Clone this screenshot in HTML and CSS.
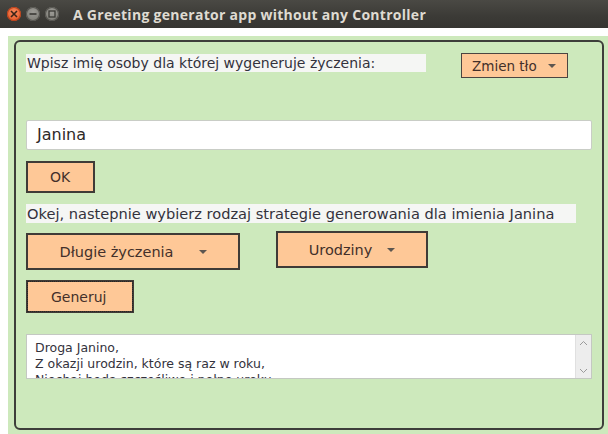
FILE: index.html
```
<!DOCTYPE html>
<html lang="pl">
<head>
<meta charset="utf-8">
<title>A Greeting generator app without any Controller</title>
<link rel="stylesheet" href="styles.css">
</head>
<body>
<div class="titlebar">
  <div class="wbtns">
    <span class="wbtn close"><svg width="8" height="8" viewBox="0 0 8 8"><path d="M1 1L7 7M7 1L1 7" stroke="#3a2418" stroke-width="1.6"/></svg></span>
    <span class="wbtn"><svg width="8" height="8" viewBox="0 0 8 8"><path d="M0.5 4H7.5" stroke="#3a3935" stroke-width="1.6"/></svg></span>
    <span class="wbtn"><svg width="8" height="8" viewBox="0 0 8 8"><rect x="1" y="1" width="6" height="6" fill="none" stroke="#3a3935" stroke-width="1.3"/></svg></span>
  </div>
  <div class="wtitle">A Greeting generator app without any Controller</div>
</div>
<div class="frame">
  <div class="green">
    <div class="panel">
      <div class="row1">
        <div class="label label-1">Wpisz imię osoby dla której wygeneruje życzenia:</div>
        <div class="menu-btn">Zmien tło<span class="arrow"></span></div>
      </div>
      <div class="field">Janina</div>
      <div class="btn btn-ok">OK</div>
      <div class="label label-2">Okej, nastepnie wybierz rodzaj strategie generowania dla imienia Janina</div>
      <div class="row2">
        <div class="combo combo-long">Długie życzenia<span class="arrow"></span></div>
        <div class="combo combo-type">Urodziny<span class="arrow"></span></div>
      </div>
      <div class="btn btn-gen">Generuj</div>
      <div class="textarea">
        <div class="ta-text">Droga Janino,<br>Z okazji urodzin, które są raz w roku,<br>Niechaj będą szczęśliwe i pełne uroku</div>
        <div class="ta-scroll">
          <svg width="9" height="6" viewBox="0 0 9 6"><path d="M1 5L4.5 1.5L8 5" fill="none" stroke="#9a9a9a" stroke-width="1"/></svg>
          <svg width="9" height="6" viewBox="0 0 9 6"><path d="M1 1L4.5 4.5L8 1" fill="none" stroke="#9a9a9a" stroke-width="1"/></svg>
        </div>
      </div>
    </div>
  </div>
</div>
</body>
</html>
```
FILE: styles.css
```
html, body {
  margin: 0;
  padding: 0;
  background: #ffffff;
  width: 608px;
  height: 434px;
  overflow: hidden;
  font-family: "DejaVu Sans", sans-serif;
}
.titlebar {
  height: 28px;
  background: linear-gradient(#4a4944, #3b3a36 60%, #363531);
  display: flex;
  align-items: center;
}
.wbtns {
  display: flex;
  gap: 5px;
  margin-left: 7px;
}
.wbtn {
  width: 14px;
  height: 14px;
  border-radius: 50%;
  background: radial-gradient(circle at 50% 35%, #9c9b96, #77766f);
  box-shadow: inset 0 0 0 1px #55544f;
  display: flex;
  align-items: center;
  justify-content: center;
}
.wbtn.close {
  background: radial-gradient(circle at 50% 35%, #f7875a, #e0501f);
  box-shadow: inset 0 0 0 1px #b8401a;
}
.wtitle {
  margin-left: 14px;
  font-family: "Open Sans", "DejaVu Sans", sans-serif;
  font-weight: bold;
  font-size: 14px;
  color: #dfdbd2;
  letter-spacing: 0.28px;
}
.frame {
  padding: 8px 0 0 8px;
  height: 398px;
}
.green {
  background: #cde9bc;
  height: 390px;
  padding: 4px 4px 4px 6px;
}
.panel {
  box-sizing: border-box;
  height: 390px;
  border: 2px solid #3d3e3a;
  border-radius: 6px;
  padding: 11px 0 0 10px;
  display: flex;
  flex-direction: column;
  align-items: flex-start;
  color: #33323c;
}
.row1 {
  display: flex;
  align-items: flex-start;
  gap: 35px;
  height: 26px;
}
.label {
  background: #f5f6f4;
  height: 18px;
  padding-left: 1px;
  box-sizing: border-box;
  white-space: nowrap;
}
.label-1 {
  width: 400px;
  margin-top: 1px;
  font-size: 14px;
  line-height: 18px;
}
.label-2 {
  width: 550px;
  height: 19px;
  font-size: 14.6px;
  line-height: 19px;
  margin-top: 11px;
}
.menu-btn {
  box-sizing: border-box;
  width: 107px;
  height: 25px;
  background: #fec897;
  border: 1px solid #4b4541;
  display: flex;
  align-items: center;
  padding-left: 10px;
  font-size: 13.5px;
  color: #43302a;
}
.menu-btn .arrow {
  margin-left: 11px;
}
.arrow {
  width: 0;
  height: 0;
  border-left: 4px solid transparent;
  border-right: 4px solid transparent;
  border-top: 4px solid #5c5650;
}
.field {
  box-sizing: border-box;
  margin-top: 41px;
  width: 566px;
  height: 30px;
  background: #ffffff;
  border: 1px solid #c9cdc6;
  border-radius: 2px;
  font-size: 16px;
  line-height: 28px;
  padding-left: 10px;
  color: #2f2a28;
}
.btn {
  box-sizing: border-box;
  background: #fec897;
  border: 2px solid #3f3b37;
  display: flex;
  align-items: center;
  font-size: 14px;
  color: #43302a;
}
.btn-ok {
  margin-top: 11px;
  width: 69px;
  height: 32px;
  padding-left: 22px;
}
.row2 {
  margin-top: 8px;
  display: flex;
  align-items: flex-start;
  gap: 36px;
  height: 39px;
}
.combo {
  box-sizing: border-box;
  background: #fec897;
  border: 2px solid #3f3b37;
  height: 37px;
  display: flex;
  align-items: center;
  justify-content: center;
  font-size: 14.5px;
  color: #43302a;
}
.combo-long {
  width: 214px;
  margin-top: 2px;
}
.combo-long .arrow {
  margin-left: 25px;
}
.combo-type {
  width: 152px;
}
.combo-type .arrow {
  margin-left: 15px;
}
.btn-gen {
  margin-top: 10px;
  width: 108px;
  height: 33px;
  padding-left: 23px;
  outline: 1px dotted #2a2522;
  outline-offset: -2px;
}
.textarea {
  box-sizing: border-box;
  margin-top: 21px;
  width: 566px;
  height: 45px;
  background: #ffffff;
  border: 1px solid #c4c8c2;
  display: flex;
  overflow: hidden;
}
.ta-text {
  flex: 1;
  padding: 5px 0 0 8px;
  font-size: 12.5px;
  line-height: 16px;
  color: #33323c;
  white-space: nowrap;
  overflow: hidden;
}
.ta-scroll {
  width: 15px;
  background: #ededed;
  border-left: 1px solid #e0e0e0;
  display: flex;
  flex-direction: column;
  align-items: center;
  justify-content: space-between;
  padding: 5px 0 4px;
}
```
